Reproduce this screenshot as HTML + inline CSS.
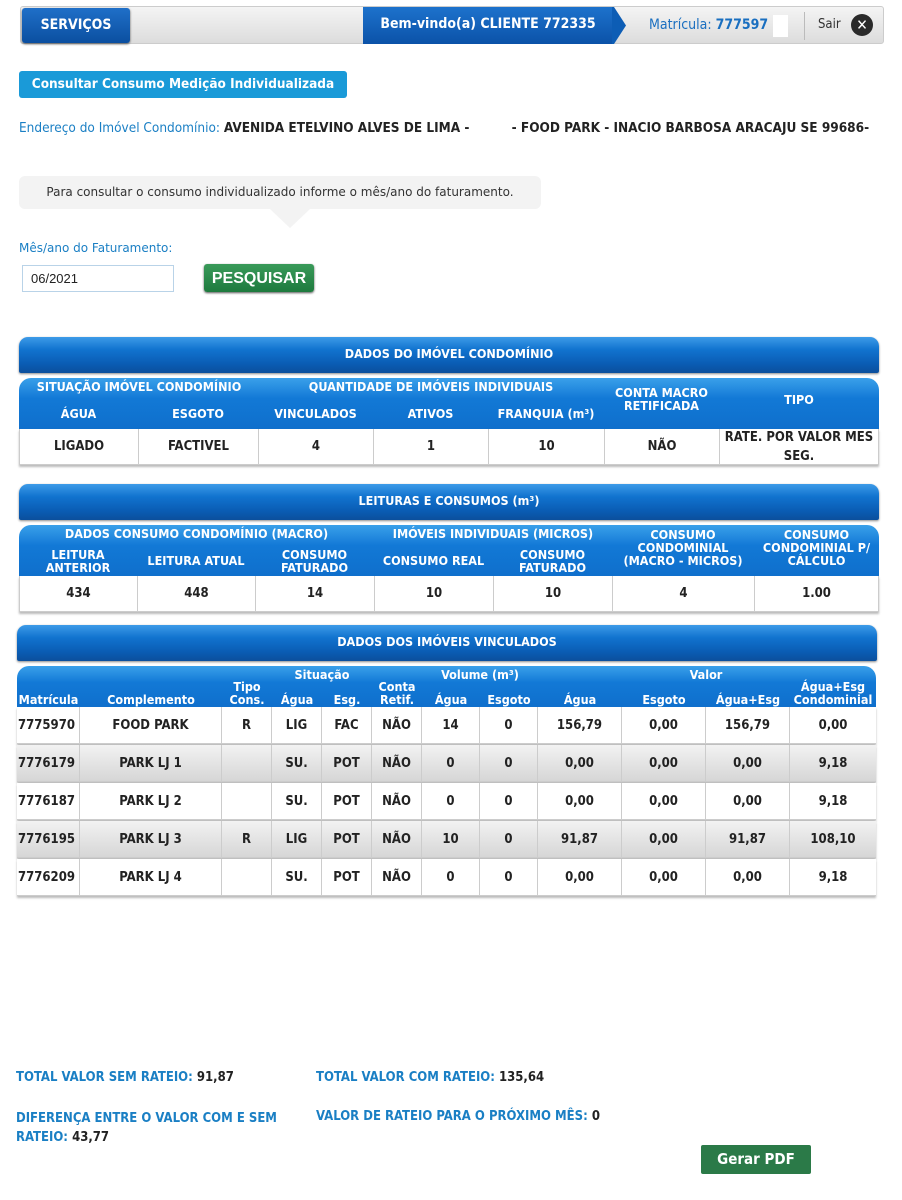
<!DOCTYPE html>
<html><head><meta charset="utf-8"><style>
*{box-sizing:border-box;margin:0;padding:0}
body{width:902px;height:1200px;background:#fff;font-family:"DejaVu Sans Condensed","DejaVu Sans","Liberation Sans",sans-serif;font-size:12.5px;color:#222;position:relative;overflow:hidden}
.a{position:absolute}
.c{position:absolute;display:flex;align-items:center;justify-content:center;text-align:center;line-height:13px}
.b{font-weight:bold}
.w{color:#fff;font-weight:bold}
.bar{position:absolute;border-radius:9px 9px 2px 2px;background:linear-gradient(#3d9be8 0%,#1173cf 35%,#0a5cb3 75%,#0b4f9c 100%);box-shadow:0 1px 2px #888}
.hd{position:absolute;border-radius:12px 12px 0 0;background:linear-gradient(#3aa0ea,#1279d6 40%,#0f6fcc)}
.row{position:absolute;border-bottom:1px solid #ccc;box-shadow:0 2px 2px #bbb}
.cell{position:absolute;top:0;height:100%;display:flex;align-items:center;justify-content:center;border-right:1px solid #ccc;font-weight:bold;text-align:center;line-height:19px;font-size:13px}
.lbl{color:#1a7fc4;font-weight:bold}
</style></head><body>
<div class="a" style="left:20px;top:6px;width:864px;height:38px;border:1px solid #ccc;border-radius:3px;background:linear-gradient(#f4f4f4,#dcdcdc)"></div>
<div class="c w" style="left:22px;top:8px;width:108px;height:35px;border-radius:3px;background:linear-gradient(#1f6fc8,#0b4fa0);font-size:14px;box-shadow:0 1px 2px #555">SERVIÇOS</div>
<div class="a" style="left:363px;top:7px;width:250px;height:37px;background:linear-gradient(#1d72cc,#0b52a8)"></div>
<svg class="a" style="left:612px;top:7px" width="14" height="37"><polygon points="0,0 2,0 14,18.5 2,37 0,37" fill="#0d5db5"/></svg>
<div class="c w" style="left:363px;top:7px;width:250px;height:35px;font-size:14px">Bem-vindo(a) CLIENTE 772335</div>
<div class="a" style="left:649px;top:17px;color:#1a6fc0;font-size:14px">Matrícula: <b>777597</b></div>
<div class="a" style="left:773px;top:15px;width:15px;height:22px;background:#fff"></div>
<div class="a" style="left:804px;top:12px;width:1px;height:28px;background:#bbb"></div>
<div class="a" style="left:818px;top:17px;font-size:13px;color:#333">Sair</div>
<div class="c" style="left:851px;top:14px;width:22px;height:22px;border-radius:50%;background:#2a2a2a;color:#fff;font-size:15px;font-weight:bold">✕</div>

<div class="c w" style="left:19px;top:71px;width:328px;height:27px;border-radius:3px;background:#1a9ad8;font-size:13.5px">Consultar Consumo Medição Individualizada</div>
<div class="a" style="left:19px;top:120px;font-size:13.5px;color:#1a7fc4;white-space:pre">Endereço do Imóvel Condomínio: <b style="color:#222">AVENIDA ETELVINO ALVES DE LIMA -          - FOOD PARK - INACIO BARBOSA ARACAJU SE 99686-</b></div>

<div class="c" style="left:19px;top:176px;width:522px;height:33px;border-radius:6px;background:#f3f3f3;font-family:'DejaVu Sans',sans-serif;font-size:12px;color:#333">Para consultar o consumo individualizado informe o mês/ano do faturamento.</div>
<svg class="a" style="left:270px;top:209px" width="40" height="19"><polygon points="0,0 40,0 20,19" fill="#f3f3f3"/></svg>
<div class="a" style="left:19px;top:241px;font-family:'DejaVu Sans',sans-serif;font-size:12px;color:#1a7fc4">Mês/ano do Faturamento:</div>
<div class="a" style="left:22px;top:265px;width:152px;height:27px;border:1px solid #b9d3e8;font-family:'Liberation Sans',sans-serif;font-size:13px;padding:5px 8px">06/2021</div>
<div class="c" style="left:204px;top:264px;width:110px;height:28px;border-radius:3px;background:linear-gradient(#3a9a5a,#1e7a3e);color:#fff;font-family:'Liberation Sans',sans-serif;font-weight:bold;font-size:16px;box-shadow:0 1px 2px #555">PESQUISAR</div>

<div class="bar" style="left:19px;top:337px;width:860px;height:36px"></div>
<div class="c w" style="left:19px;top:337px;width:860px;height:33px">DADOS DO IMÓVEL CONDOMÍNIO</div>
<div class="hd" style="left:19px;top:378px;width:860px;height:51px"></div>
<div class="c w" style="left:19px;top:378px;width:240px;height:16px">SITUAÇÃO IMÓVEL CONDOMÍNIO</div>
<div class="c w" style="left:258px;top:378px;width:346px;height:16px">QUANTIDADE DE IMÓVEIS INDIVIDUAIS</div>
<div class="c w" style="left:19px;top:405px;width:119px;height:16px">ÁGUA</div>
<div class="c w" style="left:138px;top:405px;width:120px;height:16px">ESGOTO</div>
<div class="c w" style="left:258px;top:405px;width:115px;height:16px">VINCULADOS</div>
<div class="c w" style="left:373px;top:405px;width:115px;height:16px">ATIVOS</div>
<div class="c w" style="left:488px;top:405px;width:116px;height:16px">FRANQUIA (m³)</div>
<div class="c w" style="left:604px;top:384px;width:115px;height:30px">CONTA MACRO<br>RETIFICADA</div>
<div class="c w" style="left:719px;top:391px;width:160px;height:16px">TIPO</div>
<div class="row" style="left:19px;top:429px;width:860px;height:36px;border-left:1px solid #ccc;border-right:1px solid #ccc">
<div class="cell" style="left:0;width:119px">LIGADO</div><div class="cell" style="left:119px;width:120px">FACTIVEL</div><div class="cell" style="left:239px;width:115px">4</div><div class="cell" style="left:354px;width:115px">1</div><div class="cell" style="left:469px;width:116px">10</div><div class="cell" style="left:585px;width:115px">NÃO</div><div class="cell" style="left:700px;width:158px;border:0">RATE. POR VALOR MES<br>SEG.</div></div>

<div class="bar" style="left:19px;top:484px;width:860px;height:36px"></div>
<div class="c w" style="left:19px;top:484px;width:860px;height:33px">LEITURAS E CONSUMOS (m³)</div>
<div class="hd" style="left:19px;top:525px;width:860px;height:51px"></div>
<div class="c w" style="left:19px;top:525px;width:355px;height:16px">DADOS CONSUMO CONDOMÍNIO (MACRO)</div>
<div class="c w" style="left:374px;top:525px;width:238px;height:16px">IMÓVEIS INDIVIDUAIS (MICROS)</div>
<div class="c w" style="left:19px;top:547px;width:118px;height:28px">LEITURA<br>ANTERIOR</div>
<div class="c w" style="left:137px;top:552px;width:118px;height:16px">LEITURA ATUAL</div>
<div class="c w" style="left:255px;top:547px;width:119px;height:28px">CONSUMO<br>FATURADO</div>
<div class="c w" style="left:374px;top:552px;width:119px;height:16px">CONSUMO REAL</div>
<div class="c w" style="left:493px;top:547px;width:119px;height:28px">CONSUMO<br>FATURADO</div>
<div class="c w" style="left:612px;top:526px;width:142px;height:42px">CONSUMO<br>CONDOMINIAL<br>(MACRO - MICROS)</div>
<div class="c w" style="left:754px;top:526px;width:125px;height:42px">CONSUMO<br>CONDOMINIAL P/<br>CÁLCULO</div>
<div class="row" style="left:19px;top:576px;width:860px;height:36px;border-left:1px solid #ccc;border-right:1px solid #ccc">
<div class="cell" style="left:0;width:118px">434</div><div class="cell" style="left:118px;width:118px">448</div><div class="cell" style="left:236px;width:119px">14</div><div class="cell" style="left:355px;width:119px">10</div><div class="cell" style="left:474px;width:119px">10</div><div class="cell" style="left:593px;width:142px">4</div><div class="cell" style="left:735px;width:123px;border:0">1.00</div></div>

<div class="bar" style="left:17px;top:625px;width:860px;height:36px"></div>
<div class="c w" style="left:17px;top:625px;width:860px;height:33px">DADOS DOS IMÓVEIS VINCULADOS</div>
<div class="hd" style="left:17px;top:666px;width:859px;height:41px"></div>
<div class="c w" style="left:272px;top:666px;width:100px;height:16px">Situação</div>
<div class="c w" style="left:422px;top:666px;width:116px;height:16px">Volume (m³)</div>
<div class="c w" style="left:622px;top:666px;width:168px;height:16px">Valor</div>
<div class="c w" style="left:17px;top:692px;width:63px;height:14px">Matrícula</div>
<div class="c w" style="left:80px;top:692px;width:142px;height:14px">Complemento</div>
<div class="c w" style="left:222px;top:679px;width:50px;height:27px">Tipo<br>Cons.</div>
<div class="c w" style="left:272px;top:692px;width:50px;height:14px">Água</div>
<div class="c w" style="left:322px;top:692px;width:50px;height:14px">Esg.</div>
<div class="c w" style="left:372px;top:679px;width:50px;height:27px">Conta<br>Retif.</div>
<div class="c w" style="left:422px;top:692px;width:58px;height:14px">Água</div>
<div class="c w" style="left:480px;top:692px;width:58px;height:14px">Esgoto</div>
<div class="c w" style="left:538px;top:692px;width:84px;height:14px">Água</div>
<div class="c w" style="left:622px;top:692px;width:84px;height:14px">Esgoto</div>
<div class="c w" style="left:706px;top:692px;width:84px;height:14px">Água+Esg</div>
<div class="c w" style="left:790px;top:679px;width:86px;height:27px">Água+Esg<br>Condominial</div>

<div id="t3"></div>
<script>
var rows=[["7775970","FOOD PARK","R","LIG","FAC","NÃO","14","0","156,79","0,00","156,79","0,00"],
["7776179","PARK LJ 1","","SU.","POT","NÃO","0","0","0,00","0,00","0,00","9,18"],
["7776187","PARK LJ 2","","SU.","POT","NÃO","0","0","0,00","0,00","0,00","9,18"],
["7776195","PARK LJ 3","R","LIG","POT","NÃO","10","0","91,87","0,00","91,87","108,10"],
["7776209","PARK LJ 4","","SU.","POT","NÃO","0","0","0,00","0,00","0,00","9,18"]];
var xs=[17,80,222,272,322,372,422,480,538,622,706,790,876];
var h="";
rows.forEach(function(r,i){
 var bg=i%2?"linear-gradient(#f2f2f2,#d6d6d6)":"#fff";
 h+='<div class="row" style="left:17px;top:'+(707+i*38)+'px;width:859px;height:37px;background:'+bg+'">';
 r.forEach(function(v,j){h+='<div class="cell" style="left:'+(xs[j]-17)+'px;width:'+(xs[j+1]-xs[j])+'px;'+(j==0?'justify-content:flex-start;padding-left:1px;':'')+(j==11?'border:0':'')+'">'+v+'</div>';});
 h+='</div>';});
document.getElementById("t3").innerHTML=h;
</script>

<div class="a b" style="left:16px;top:1070px;font-size:13px"><span class="lbl">TOTAL VALOR SEM RATEIO:</span> 91,87</div>
<div class="a b" style="left:316px;top:1070px;font-size:13px"><span class="lbl">TOTAL VALOR COM RATEIO:</span> 135,64</div>
<div class="a b" style="left:16px;top:1109px;font-size:13px;line-height:19px;width:290px"><span class="lbl">DIFERENÇA ENTRE O VALOR COM E SEM RATEIO:</span> 43,77</div>
<div class="a b" style="left:316px;top:1109px;font-size:13px"><span class="lbl">VALOR DE RATEIO PARA O PRÓXIMO MÊS:</span> 0</div>
<div class="c w" style="left:701px;top:1145px;width:110px;height:29px;border-radius:2px;background:#2b7a48;font-size:15px">Gerar PDF</div>
</body></html>
